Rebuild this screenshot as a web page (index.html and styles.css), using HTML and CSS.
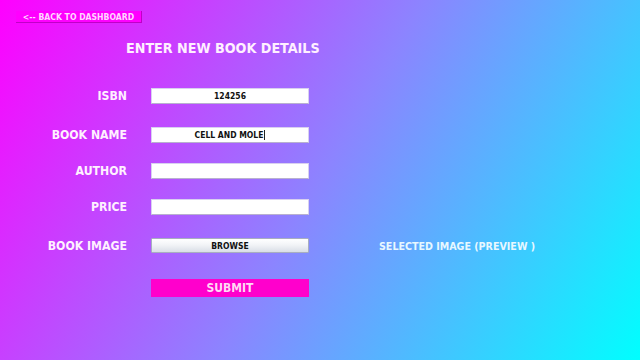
FILE: index.html
```html
<!DOCTYPE html>
<html lang="en">
<head>
    <meta charset="UTF-8">
    <meta name="viewport" content="width=device-width, initial-scale=1.0">
    <title>Add Book</title>
    <link rel="stylesheet" href="styles.css">
</head>
<body>

<div class="page">
    <button class="back-btn">&lt;-- BACK TO DASHBOARD</button>

    <h1>ENTER NEW BOOK DETAILS</h1>

    <div class="form">
        <label>ISBN</label>
        <div class="field">124256</div>
        <div></div>

        <label>BOOK NAME</label>
        <div class="field">CELL AND MOLE<span class="caret"></span></div>
        <div></div>

        <label>AUTHOR</label>
        <div class="field"></div>
        <div></div>

        <label>PRICE</label>
        <div class="field"></div>
        <div></div>

        <label>BOOK IMAGE</label>
        <button class="browse-btn">BROWSE</button>
        <div class="preview">SELECTED IMAGE (PREVIEW )</div>

        <div></div>
        <button class="submit-btn">SUBMIT</button>
        <div></div>
    </div>
</div>

</body>
</html>
```

FILE: styles.css
```css
body {
    margin: 0;
    height: 360px;
    overflow: hidden;
    font-family: "DejaVu Sans Condensed", "DejaVu Sans", sans-serif;
    font-stretch: condensed;
    font-weight: bold;
    background: linear-gradient(120deg, #ff00ff 0%, #8c84ff 50%, #00ffff 100%);
}

.page {
    padding-top: 11px;
}

.back-btn {
    display: block;
    margin-left: 16px;
    width: 126px;
    height: 12px;
    padding: 0;
    font-family: inherit;
    font-stretch: condensed;
    font-weight: bold;
    font-size: 8.6px;
    line-height: 10px;
    color: #ffd6ff;
    background-color: #ff00ff;
    border: none;
    border-right: 1px solid #c000c8;
    border-bottom: 1px solid #c000c8;
}

h1 {
    margin: 17px 0 0 126px;
    font-size: 14.2px;
    line-height: 16px;
    color: #fff0ff;
}

.form {
    display: grid;
    grid-template-columns: 127px 158px auto;
    grid-template-rows: 39px 36px 36px 39px 41px 18px;
    column-gap: 24px;
    margin-top: 32px;
}

label {
    text-align: right;
    font-size: 12.2px;
    line-height: 16px;
    color: #fff0ff;
}

.field {
    height: 14px;
    background-color: #fff;
    border: 1px solid #d8d0f0;
    border-bottom-color: #b8b0d0;
    font-size: 8.5px;
    line-height: 14px;
    text-align: center;
    color: #111;
}

.caret {
    display: inline-block;
    width: 1px;
    height: 10px;
    margin-left: 1px;
    vertical-align: -2px;
    background-color: #222;
}

.browse-btn {
    height: 15px;
    padding: 0;
    font-family: inherit;
    font-stretch: condensed;
    font-weight: bold;
    font-size: 8.5px;
    color: #111;
    background: linear-gradient(#ffffff, #f2f4f7 45%, #d9dee6);
    border: 1px solid #a8aec0;
    border-radius: 1px;
}

.preview {
    margin-left: 46px;
    font-size: 10.6px;
    line-height: 16px;
    color: #e8f8ff;
}

.submit-btn {
    height: 18px;
    padding: 0;
    font-family: inherit;
    font-stretch: condensed;
    font-weight: bold;
    font-size: 12px;
    color: #ffd8f4;
    background-color: #ff00cc;
    border: none;
}
```
